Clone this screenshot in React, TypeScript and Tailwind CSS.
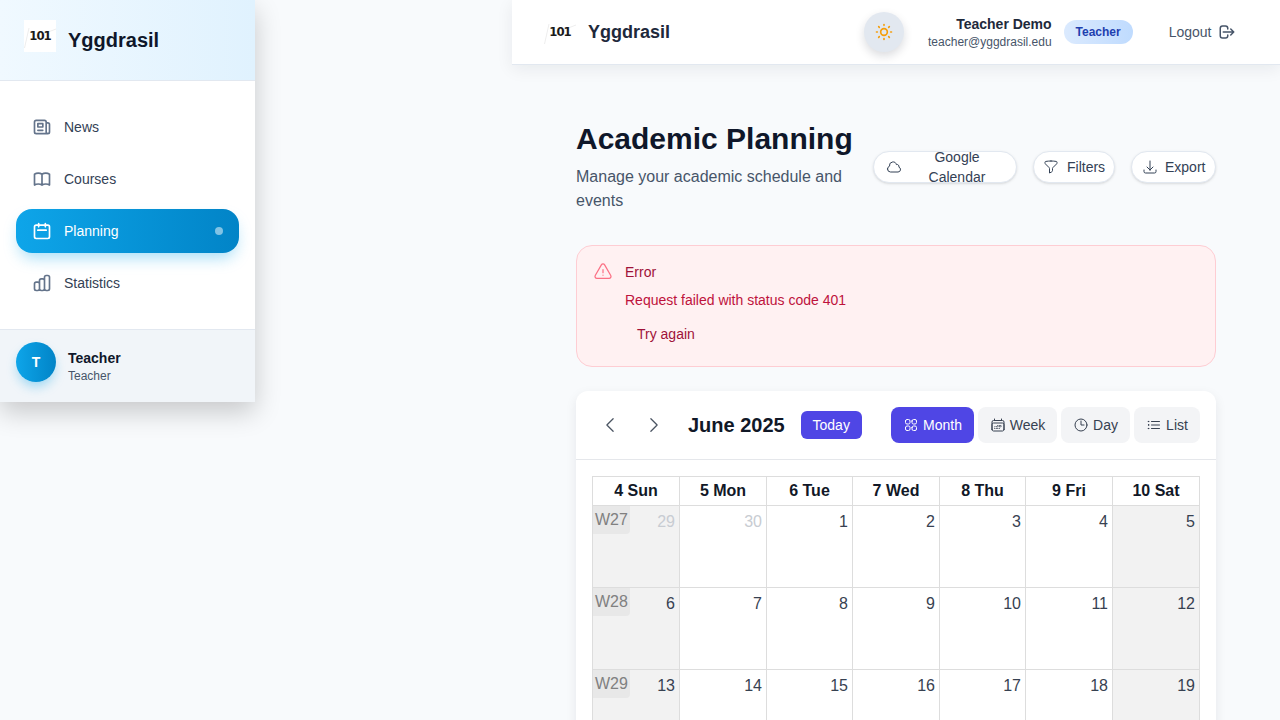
import {
  HiOutlineBookOpen,
  HiOutlineCalendar,
  HiOutlineChartBar,
  HiOutlineLogout,
  HiOutlineNewspaper,
  HiOutlineSun,
} from "react-icons/hi";
import {
  HiOutlineArrowDownTray,
  HiOutlineCalendarDays,
  HiOutlineChevronLeft,
  HiOutlineChevronRight,
  HiOutlineClock,
  HiOutlineCloud,
  HiOutlineExclamationTriangle,
  HiOutlineFunnel,
  HiOutlineListBullet,
  HiOutlineSquares2X2,
} from "react-icons/hi2";

const weeks = [
  { label: "W27", days: [29, 30, 1, 2, 3, 4, 5] },
  { label: "W28", days: [6, 7, 8, 9, 10, 11, 12] },
  { label: "W29", days: [13, 14, 15, 16, 17, 18, 19] },
];
const heads = ["4 Sun", "5 Mon", "6 Tue", "7 Wed", "8 Thu", "9 Fri", "10 Sat"];

function Logo({ box }: { box: string }) {
  return (
    <div className={`${box} relative flex h-8 w-8 shrink-0 items-center justify-center`}>
      <svg className="absolute inset-0" width="32" height="32" viewBox="0 0 32 32" fill="none">
        <path d="M0.5 28 L5 8 M19 14 L32 9" stroke="#e5e5e5" strokeWidth="0.7" />
      </svg>
      <span className="relative font-['DejaVu_Sans_Condensed','DejaVu_Sans',sans-serif] text-[13px] font-bold tracking-[-1px] text-[#1a1a1a] font-stretch-condensed">
        101
      </span>
    </div>
  );
}

function NavItem({ icon: Icon, label, active }: { icon: typeof HiOutlineNewspaper; label: string; active?: boolean }) {
  return (
    <div
      className={
        active
          ? "flex h-11 items-center gap-3 rounded-2xl bg-gradient-to-r from-[#0ea5e9] to-[#0284c7] px-4 text-white shadow-[0_8px_16px_-4px_rgba(14,165,233,0.4)]"
          : "flex h-11 items-center gap-3 rounded-2xl px-4 text-[#334155]"
      }
    >
      <Icon className={active ? "h-5 w-5 text-white" : "h-5 w-5 text-[#64748b]"} />
      <span className="flex-1 text-sm">{label}</span>
      {active ? <span className="h-2 w-2 rounded-full bg-white/50" /> : null}
    </div>
  );
}

function Pill({ icon: Icon, children, className }: { icon: typeof HiOutlineNewspaper; children: React.ReactNode; className: string }) {
  return (
    <div className={`${className} flex h-8 items-center overflow-hidden rounded-2xl border border-[#e2e8f0] bg-white text-sm text-[#334155] shadow-sm`}>
      <Icon className="h-4 w-4 shrink-0" />
      {children}
    </div>
  );
}

function ViewBtn({ icon: Icon, label, active, w }: { icon: typeof HiOutlineNewspaper; label: string; active?: boolean; w: string }) {
  return (
    <div
      className={`${w} flex h-9 items-center justify-center gap-1 rounded-lg text-sm ${
        active ? "bg-[#4f46e5] text-white" : "bg-[#f3f4f6] text-[#374151]"
      }`}
    >
      <Icon className="h-4 w-4" />
      {label}
    </div>
  );
}

export default function App() {
  return (
    <div className="flex h-screen overflow-hidden bg-[#f8fafc] font-['Liberation_Sans',sans-serif]">
      <aside className="flex h-[402px] w-[255px] shrink-0 flex-col bg-white shadow-[0_10px_25px_rgba(0,0,0,0.2)]">
        <div className="flex h-[81px] items-center gap-3 border-b border-[#e2e8f0] bg-gradient-to-r from-[#f0f9ff] to-[#e0f2fe] pb-[1px] pl-6">
          <Logo box="bg-white -mt-2" />
          <span className="text-xl font-bold text-[#0f172a]">Yggdrasil</span>
        </div>
        <nav className="flex flex-1 flex-col gap-2 px-4 pt-6">
          <NavItem icon={HiOutlineNewspaper} label="News" />
          <NavItem icon={HiOutlineBookOpen} label="Courses" />
          <NavItem icon={HiOutlineCalendar} label="Planning" active />
          <NavItem icon={HiOutlineChartBar} label="Statistics" />
        </nav>
        <div className="flex h-[73px] items-center gap-3 border-t border-[#e2e8f0] bg-[#f1f5f9] px-4">
          <div className="mb-2 flex h-10 w-10 items-center justify-center rounded-full bg-gradient-to-r from-[#0ea5e9] to-[#0284c7] text-sm font-bold text-white shadow-[0_6px_12px_-2px_rgba(14,165,233,0.4)]">
            T
          </div>
          <div>
            <div className="text-sm leading-5 font-bold text-[#0f172a]">Teacher</div>
            <div className="text-xs leading-4 text-[#475569]">Teacher</div>
          </div>
        </div>
      </aside>

      <div className="ml-[257px] flex min-w-0 flex-1 flex-col">
        <header className="flex h-[65px] shrink-0 items-center border-b border-[#e2e8f0] bg-white pr-8 pl-8 shadow-[0_4px_16px_rgba(15,23,42,0.07)]">
          <Logo box="" />
          <span className="ml-3 text-lg font-bold text-[#1e293b]">Yggdrasil</span>
          <div className="ml-[194px] flex h-10 w-10 items-center justify-center rounded-full bg-[#e2e8f0] shadow-[0_4px_10px_rgba(15,23,42,0.15)]">
            <HiOutlineSun className="h-5 w-5 text-[#f59e0b]" />
          </div>
          <div className="ml-6 text-right">
            <div className="text-sm leading-5 font-bold text-[#1e293b]">Teacher Demo</div>
            <div className="text-xs leading-4 text-[#475569]">teacher@yggdrasil.edu</div>
          </div>
          <div className="ml-3 flex h-6 w-[69px] items-center justify-center rounded-full bg-gradient-to-r from-[#dbeafe] to-[#bfdbfe] text-xs font-bold text-[#1e40af]">
            Teacher
          </div>
          <div className="ml-9 flex items-center gap-[7px] text-sm text-[#475569]">
            Logout
            <HiOutlineLogout className="h-[18px] w-[18px]" />
          </div>
        </header>

        <main className="flex flex-col px-16 pt-[56px]">
          <div className="flex items-center justify-between gap-4">
            <div className="w-[281px] shrink-0">
              <h1 className="text-3xl leading-9 font-bold text-[#0f172a]">Academic Planning</h1>
              <p className="mt-2 text-base leading-6 text-[#475569]">Manage your academic schedule and events</p>
            </div>
            <Pill icon={HiOutlineCloud} className="w-[144px] gap-2 px-3">
              <span className="flex-1 text-center leading-5">Google Calendar</span>
            </Pill>
            <Pill icon={HiOutlineFunnel} className="w-[82px] shrink-0 gap-2 pl-[9px]">
              Filters
            </Pill>
            <Pill icon={HiOutlineArrowDownTray} className="w-[85px] shrink-0 gap-[7px] pl-[10px]">
              Export
            </Pill>
          </div>

          <div className="mt-[32px] h-[122px] rounded-2xl border border-[#fecdd3] bg-[#fff1f2] pt-4 pr-4 pl-4">
            <div className="flex gap-3">
              <HiOutlineExclamationTriangle className="h-5 w-5 shrink-0 text-[#fb7185]" />
              <div className="text-sm leading-5">
                <div className="text-[#9f1239]">Error</div>
                <div className="mt-2 text-[#be123c]">Request failed with status code 401</div>
                <div className="mt-[14px] pl-3 text-[#9f1239]">Try again</div>
              </div>
            </div>
          </div>

          <section className="mt-6 rounded-xl bg-white shadow-[0_4px_12px_rgba(15,23,42,0.08)]">
            <div className="flex h-[69px] items-center border-b border-[#e5e7eb] px-4">
              <button className="flex h-9 w-9 items-center justify-center text-[#4b5563]">
                <HiOutlineChevronLeft className="h-5 w-5" />
              </button>
              <button className="ml-2 flex h-9 w-9 items-center justify-center text-[#4b5563]">
                <HiOutlineChevronRight className="h-5 w-5" />
              </button>
              <h2 className="ml-[16px] text-xl font-bold text-[#111827]">June 2025</h2>
              <div className="ml-4 flex h-7 w-[61px] items-center justify-center rounded-md bg-[#4f46e5] text-sm text-white">Today</div>
              <div className="ml-auto flex gap-1">
                <ViewBtn icon={HiOutlineSquares2X2} label="Month" active w="w-[83px]" />
                <ViewBtn icon={HiOutlineCalendarDays} label="Week" w="w-[79px]" />
                <ViewBtn icon={HiOutlineClock} label="Day" w="w-[69px]" />
                <ViewBtn icon={HiOutlineListBullet} label="List" w="w-[66px]" />
              </div>
            </div>
            <div className="p-4">
              <table className="w-[607px] table-fixed border-collapse text-[#1f2937]">
                <colgroup>
                  <col className="w-[87px]" />
                  <col className="w-[87px]" />
                  <col className="w-[86px]" />
                  <col className="w-[87px]" />
                  <col className="w-[86px]" />
                  <col className="w-[87px]" />
                  <col className="w-[87px]" />
                </colgroup>
                <thead>
                  <tr className="h-[29px]">
                    {heads.map((h) => (
                      <th key={h} className="border border-[#dddddd] text-base leading-5 font-bold text-[#111827]">
                        {h}
                      </th>
                    ))}
                  </tr>
                </thead>
                <tbody>
                  {weeks.map((week, wi) => (
                    <tr key={week.label} className="h-[82px]">
                      {week.days.map((d, di) => {
                        const other = wi === 0 && di < 2;
                        const weekend = di === 0 || di === 6;
                        return (
                          <td
                            key={d}
                            className={`relative border border-[#dddddd] p-1 text-right align-top text-base leading-6 ${
                              weekend ? "bg-[#f2f2f2]" : "bg-white"
                            } ${other ? "text-[#c8ccd2]" : "text-[#374151]"}`}
                          >
                            {di === 0 ? (
                              <span className="absolute top-0 left-0 h-7 w-[37px] rounded-br bg-[#e8e8e8] pl-[2px] text-left text-base leading-7 text-[#808080]">
                                {week.label}
                              </span>
                            ) : null}
                            {d}
                          </td>
                        );
                      })}
                    </tr>
                  ))}
                </tbody>
              </table>
            </div>
          </section>
        </main>
      </div>
    </div>
  );
}
